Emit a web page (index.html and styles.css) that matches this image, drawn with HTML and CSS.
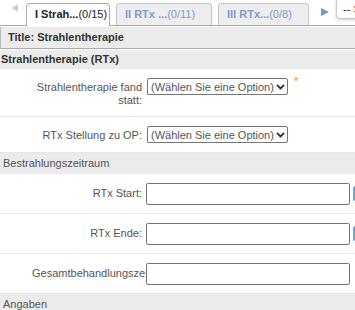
FILE: index.html
```html
<!DOCTYPE html>
<html lang="de">
<head>
    <meta charset="UTF-8">
    <meta name="viewport" content="width=device-width, initial-scale=1.0">
    <title>Strahlentherapie</title>
    <link rel="stylesheet" href="styles.css">
</head>
<body>

<div class="tabbar">
    <span class="tab-arrow tab-arrow-left"></span>
    <div class="tab tab-active tab-1"><b>I Strah...</b>(0/15)</div>
    <div class="tab tab-2"><b>II RTx ...</b>(0/11)</div>
    <div class="tab tab-3"><b>III RTx...</b>(0/8)</div>
    <span class="tab-arrow tab-arrow-right"></span>
    <div class="page-select">-- Seite wählen --</div>
</div>

<div class="title-bar">Title: Strahlentherapie</div>

<div class="section section-bold">Strahlentherapie (RTx)</div>

<div class="field">
    <label class="field-label" for="rtx_done">Strahlentherapie fand statt:</label>
    <div class="field-control">
        <span class="select-wrap">
            <select id="rtx_done">
                <option>(Wählen Sie eine Option)</option>
                <option>Ja</option>
                <option>Nein</option>
            </select>
            <svg class="chevron" width="9" height="6" viewBox="0 0 9 6"><polyline points="1,1 4.5,4.5 8,1" fill="none" stroke="#333" stroke-width="1.8"/></svg>
        </span>
        <span class="required">*</span>
    </div>
</div>

<div class="field">
    <label class="field-label" for="rtx_op">RTx Stellung zu OP:</label>
    <div class="field-control">
        <span class="select-wrap">
            <select id="rtx_op">
                <option>(Wählen Sie eine Option)</option>
                <option>neoadjuvant</option>
                <option>adjuvant</option>
            </select>
            <svg class="chevron" width="9" height="6" viewBox="0 0 9 6"><polyline points="1,1 4.5,4.5 8,1" fill="none" stroke="#333" stroke-width="1.8"/></svg>
        </span>
    </div>
</div>

<div class="section">Bestrahlungszeitraum</div>

<div class="field field-input">
    <label class="field-label" for="rtx_start">RTx Start:</label>
    <div class="field-control">
        <input type="text" id="rtx_start">
        <svg class="cal-icon" width="16" height="16" viewBox="0 0 16 16">
            <rect x="1" y="2" width="14" height="13" rx="1" fill="#fff" stroke="#7a9fd0" stroke-width="2"/>
            <rect x="1" y="2" width="14" height="4" fill="#7a9fd0"/>
        </svg>
    </div>
</div>

<div class="field field-input">
    <label class="field-label" for="rtx_end">RTx Ende:</label>
    <div class="field-control">
        <input type="text" id="rtx_end">
        <svg class="cal-icon" width="16" height="16" viewBox="0 0 16 16">
            <rect x="1" y="2" width="14" height="13" rx="1" fill="#fff" stroke="#7a9fd0" stroke-width="2"/>
            <rect x="1" y="2" width="14" height="4" fill="#7a9fd0"/>
        </svg>
    </div>
</div>

<div class="field field-input">
    <label class="field-label" for="rtx_total">Gesamtbehandlungszeit:</label>
    <div class="field-control">
        <input type="text" id="rtx_total">
    </div>
</div>

<div class="section">Angaben</div>

</body>
</html>
```

FILE: styles.css
```css
html, body {
    margin: 0;
    overflow: hidden;
}

body {
    font-family: "Liberation Sans", Arial, sans-serif;
    font-size: 11px;
    color: #555;
    background: #fff;
}

/* tabs */
.tabbar {
    display: flex;
    align-items: flex-end;
    height: 25px;
    border-bottom: 1px solid #a9a9a9;
}

.tab-arrow {
    flex-shrink: 0;
    width: 0;
    height: 0;
    align-self: flex-start;
}

.tab-arrow-left {
    margin: 4px 8px 0 11px;
    border-top: 4px solid transparent;
    border-bottom: 4px solid transparent;
    border-right: 7px solid #d0d0d0;
}

.tab-arrow-right {
    margin: 8px 0 0 6px;
    border-top: 4px solid transparent;
    border-bottom: 4px solid transparent;
    border-left: 8px solid #6e9bd0;
}

.tab {
    flex-shrink: 0;
    box-sizing: border-box;
    height: 22px;
    line-height: 21px;
    padding-left: 8px;
    margin-right: 6px;
    white-space: nowrap;
    overflow: hidden;
    background: #eee;
    border: 1px solid #c4c4c4;
    border-bottom: none;
    border-radius: 4px 4px 0 0;
    color: #7b9dc8;
}

.tab-1 { width: 84px; }
.tab-2 { width: 96px; }
.tab-3 { width: 91px; }

.tab-active {
    height: 23px;
    margin-bottom: -1px;
    background: #fff;
    border-color: #aaa;
    color: #222;
}

.page-select {
    flex-shrink: 0;
    align-self: flex-start;
    margin: -2px 0 0 7px;
    height: 19px;
    line-height: 21px;
    padding: 0 6px;
    white-space: nowrap;
    background: #fff;
    border: 1px solid #c8c8c8;
    border-radius: 4px;
    box-shadow: 0 1px 3px rgba(0, 0, 0, 0.2);
    color: #333;
}

/* title + sections */
.title-bar {
    margin-top: 1px;
    height: 21px;
    line-height: 21px;
    padding-left: 7px;
    background: #ececec;
    border-left: 1px solid #bbb;
    border-bottom: 1px solid #aaa;
    font-weight: bold;
    color: #333;
}

.section {
    height: 21px;
    line-height: 21px;
    padding-left: 3px;
    background: #ebebeb;
    color: #555;
}

.section-bold {
    margin-top: 1px;
    height: 19px;
    line-height: 19px;
    padding-left: 1px;
    font-weight: bold;
    color: #333;
}

/* fields */
.field {
    display: flex;
    align-items: flex-start;
    padding: 9px 0 9px;
    border-bottom: 1px solid #e6e6e6;
}

.field:last-of-type,
.field + .section {
    border-bottom: none;
}

.field-label {
    flex-shrink: 0;
    box-sizing: border-box;
    width: 146px;
    padding: 3px 4px 0 32px;
    line-height: 13px;
    text-align: right;
    overflow: hidden;
    color: #555;
}

.field-control {
    flex-shrink: 0;
    display: flex;
    align-items: flex-start;
}

.select-wrap {
    position: relative;
    display: block;
    margin-left: 1px;
}

.select-wrap select {
    display: block;
    box-sizing: border-box;
    width: 141px;
    height: 17px;
    padding: 0 12px 0 3px;
    -webkit-appearance: none;
    appearance: none;
    font-family: inherit;
    font-size: 11px;
    color: #555;
    border: 1px solid #767676;
    border-radius: 2px;
    background: #fff;
}

.chevron {
    position: absolute;
    right: 3px;
    top: 6px;
    pointer-events: none;
}

.required {
    margin-left: 6px;
    margin-top: -3px;
    color: #ee8833;
    font-size: 11px;
}

.field-input {
    padding: 9px 0 8px;
}

.field-input .field-label {
    padding-top: 4px;
}

.field-control input {
    box-sizing: border-box;
    width: 204px;
    height: 22px;
    margin: 0;
    border: 1px solid #767676;
    border-radius: 2px;
    font-family: inherit;
    font-size: 11px;
}

.cal-icon {
    flex-shrink: 0;
    margin: 2px 0 0 3px;
}
```
